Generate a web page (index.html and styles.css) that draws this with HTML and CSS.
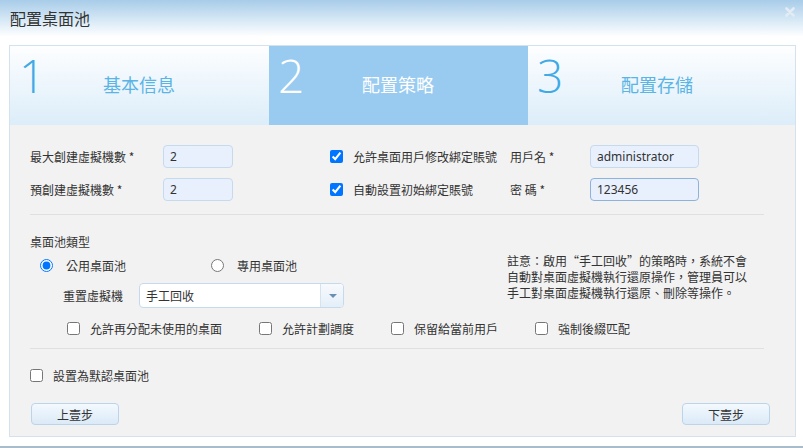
FILE: index.html
```html
<!DOCTYPE html>
<html lang="zh-TW">
<head>
    <meta charset="UTF-8">
    <title>配置桌面池</title>
    <link rel="stylesheet" href="styles.css">
</head>
<body>
    <div class="dialog">
        <!-- Title bar -->
        <div class="dialog-title">
            <span>配置桌面池</span>
            <svg class="close" width="10" height="10" viewBox="0 0 10 10">
                <path d="M1.5 1.5 L8.5 8.5 M8.5 1.5 L1.5 8.5" stroke="#e3ecf4" stroke-width="2.6" stroke-linecap="round"/>
            </svg>
        </div>

        <div class="panel">
            <!-- Wizard steps -->
            <div class="steps">
                <div class="step">
                    <span class="step-num">1</span>
                    <span class="step-name">基本信息</span>
                </div>
                <div class="step active">
                    <span class="step-num">2</span>
                    <span class="step-name">配置策略</span>
                </div>
                <div class="step last">
                    <span class="step-num">3</span>
                    <span class="step-name">配置存儲</span>
                </div>
            </div>

            <!-- Step form -->
            <div class="form">
                <div class="row">
                    <label class="field-label">最大創建虛擬機數 *</label>
                    <input class="text-input small" type="text" value="2">
                    <label class="check first">
                        <input type="checkbox" checked>
                        <span>允許桌面用戶修改綁定賬號</span>
                    </label>
                    <label class="field-label short">用戶名 *</label>
                    <input class="text-input" type="text" value="administrator">
                </div>
                <div class="row">
                    <label class="field-label">預創建虛擬機數 *</label>
                    <input class="text-input small" type="text" value="2">
                    <label class="check first">
                        <input type="checkbox" checked>
                        <span>自動設置初始綁定賬號</span>
                    </label>
                    <label class="field-label short">密 碼 *</label>
                    <input class="text-input focused" type="text" value="123456">
                </div>

                <div class="divider"></div>

                <div class="pool">
                    <div class="pool-left">
                        <div class="section-title">桌面池類型</div>
                        <div class="radio-row">
                            <label class="radio">
                                <input type="radio" name="pool" checked>
                                <span>公用桌面池</span>
                            </label>
                            <label class="radio">
                                <input type="radio" name="pool">
                                <span>專用桌面池</span>
                            </label>
                        </div>
                        <div class="select-row">
                            <span class="select-label">重置虛擬機</span>
                            <div class="select">
                                <span class="select-value">手工回收</span>
                                <span class="select-arrow"></span>
                            </div>
                        </div>
                    </div>
                    <p class="note">
                        註意：啟用“手工回收”的策略時，系統不會<br>
                        自動對桌面虛擬機執行還原操作，管理員可以<br>
                        手工對桌面虛擬機執行還原、刪除等操作。
                    </p>
                </div>

                <div class="check-row">
                    <label class="check item1"><input type="checkbox"><span>允許再分配未使用的桌面</span></label>
                    <label class="check item2"><input type="checkbox"><span>允許計劃調度</span></label>
                    <label class="check item3"><input type="checkbox"><span>保留給當前用戶</span></label>
                    <label class="check"><input type="checkbox"><span>強制後綴匹配</span></label>
                </div>

                <div class="divider"></div>

                <label class="check default-check">
                    <input type="checkbox">
                    <span>設置為默認桌面池</span>
                </label>

                <div class="buttons">
                    <button class="btn">上壹步</button>
                    <button class="btn">下壹步</button>
                </div>
            </div>
        </div>
    </div>
</body>
</html>
```

FILE: styles.css
```css
/* General styles */
* {
    box-sizing: border-box;
}

body {
    margin: 0;
    width: 803px;
    height: 448px;
    overflow: hidden;
    font-family: "Noto Sans CJK TC", "Noto Sans", sans-serif;
    font-size: 12px;
    color: #333;
    background-color: #fff;
}

.dialog {
    height: 448px;
    border-bottom: 2px solid #a9bccb;
}

/* Title bar */
.dialog-title {
    display: flex;
    justify-content: space-between;
    align-items: center;
    height: 36px;
    padding: 0 8px 0 10px;
    font-size: 16px;
    color: #333;
    background: linear-gradient(to bottom, #a8cce9 0%, #d6e8f5 55%, #fdfeff 100%);
}

.dialog-title .close {
    margin-top: -12px;
}

.panel {
    margin: 9px 7px 0 9px;
    height: 392px;
    border: 1px solid #d3e2ec;
    background-color: #f2f2f2;
}

/* Wizard steps */
.steps {
    display: flex;
    height: 79px;
}

.step {
    display: flex;
    align-items: flex-start;
    width: 259px;
    background: linear-gradient(to bottom, #fdfeff 0%, #dcedf9 100%);
}

.step.last {
    flex: 1;
}

.step-num {
    width: 93px;
    padding-left: 9px;
    margin-top: 6px;
    font-family: "Open Sans", "Noto Sans", sans-serif;
    font-weight: 300;
    font-size: 46px;
    line-height: 46px;
    color: #3eaae6;
}

.step-name {
    margin-top: 26px;
    font-size: 18px;
    line-height: 24px;
    color: #5ab4e5;
}

.step.active {
    background: #99cbf1;
}

.step.active .step-num,
.step.active .step-name {
    color: #fff;
}

/* Form */
.form {
    padding: 15px 24px 0 20px;
}

.row {
    display: flex;
    align-items: center;
    height: 33px;
}

.field-label {
    width: 133px;
}

.field-label.short {
    width: 80px;
}

.text-input {
    width: 109px;
    height: 23px;
    padding: 0 6px;
    font-family: "Noto Sans", sans-serif;
    font-size: 12px;
    color: #333;
    background-color: #e8f0fe;
    border: 1px solid #c6daee;
    border-radius: 4px;
}

.text-input.small {
    width: 70px;
}

.text-input.focused {
    border-color: #8db3dc;
}

.check {
    display: flex;
    align-items: center;
}

.check input {
    width: 13px;
    height: 13px;
    margin: 0 10px 0 0;
}

.check.first {
    width: 180px;
    margin-left: 97px;
}

.divider {
    height: 1px;
    margin: 8px 7px 0 0;
    background-color: #e0e0e0;
}

/* Pool type */
.pool {
    display: flex;
}

.pool-left {
    width: 477px;
}

.section-title {
    margin-top: 17px;
    line-height: 20px;
}

.radio-row {
    display: flex;
    align-items: center;
    height: 26px;
    padding-left: 10px;
}

.radio {
    display: flex;
    align-items: center;
    width: 171px;
}

.radio input {
    width: 13px;
    height: 13px;
    margin: 0 13px 0 0;
}

.select-row {
    display: flex;
    align-items: center;
    margin-top: 5px;
    padding-left: 33px;
}

.select-label {
    width: 76px;
}

.select {
    display: flex;
    width: 205px;
    height: 25px;
    background-color: #fff;
    border: 1px solid #c6daee;
    border-radius: 4px;
    overflow: hidden;
}

.select-value {
    flex: 1;
    padding-left: 6px;
    line-height: 23px;
}

.select-arrow {
    position: relative;
    width: 23px;
    border-left: 1px solid #d5e3f0;
    background: linear-gradient(to bottom, #f7fafd, #e4eef8);
}

.select-arrow::after {
    content: "";
    position: absolute;
    left: 8px;
    top: 10px;
    border-left: 4px solid transparent;
    border-right: 4px solid transparent;
    border-top: 4px solid #6b8fb3;
}

.note {
    margin: 38px 0 0 0;
    line-height: 16px;
}

.check-row {
    display: flex;
    align-items: center;
    height: 24px;
    margin-top: 8px;
    padding-left: 37px;
}

.check-row .item1 {
    width: 192px;
}

.check-row .item2 {
    width: 132px;
}

.check-row .item3 {
    width: 144px;
}

.default-check {
    height: 24px;
    margin-top: 14px;
    padding-left: 0;
}

/* Buttons */
.buttons {
    display: flex;
    justify-content: space-between;
    margin-top: 16px;
    padding: 0 1px 0 1px;
}

.btn {
    width: 88px;
    height: 22px;
    font-family: "Noto Sans CJK TC", sans-serif;
    font-size: 12px;
    color: #333;
    background: linear-gradient(to bottom, #f3f9fe, #dbeaf7);
    border: 1px solid #bcd4ea;
    border-radius: 4px;
    cursor: pointer;
}
```
